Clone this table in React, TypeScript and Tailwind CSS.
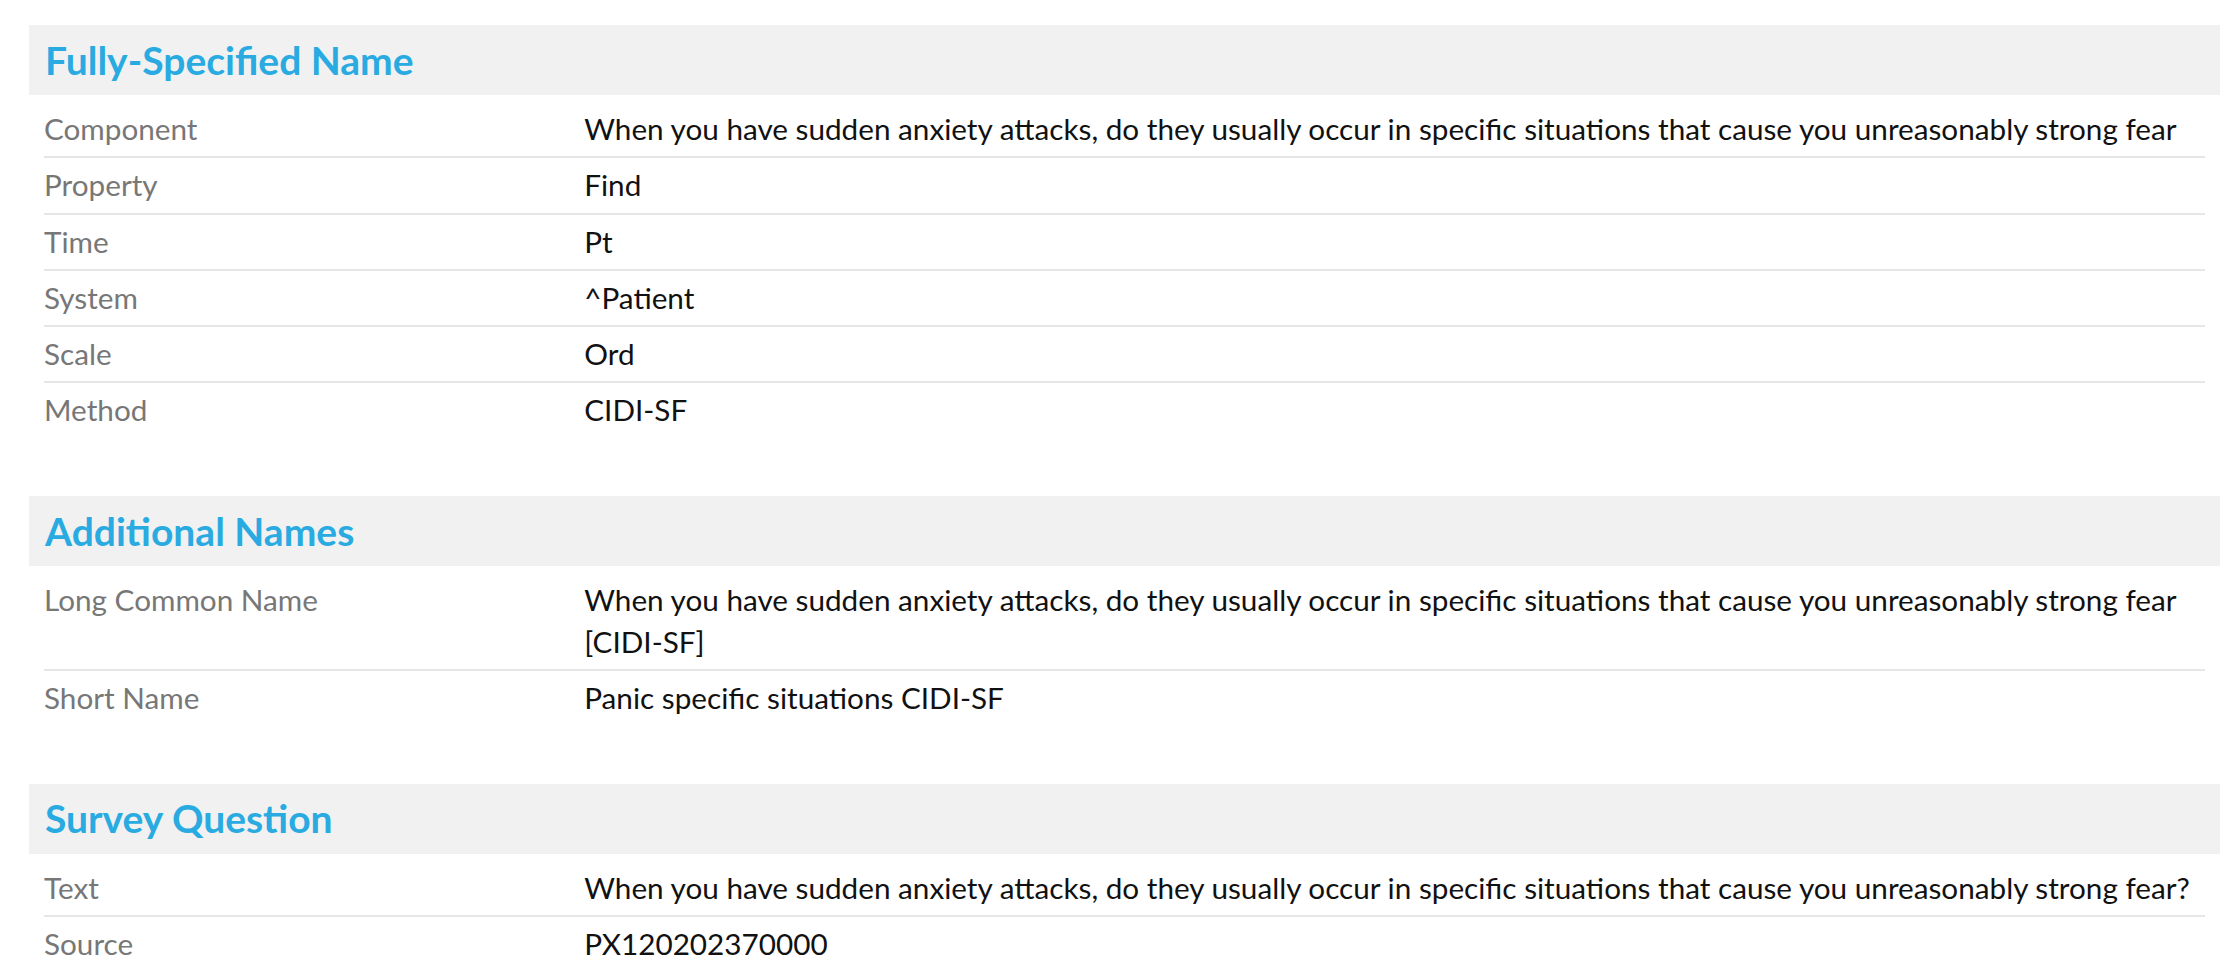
import React from 'react';

type Row = { label: string; value: string };
type Section = { title: string; rows: Row[] };

const FEAR = 'When you have sudden anxiety attacks, do they usually occur in specific situations that cause you unreasonably strong fear';

const sections: Section[] = [
  {
    title: 'Fully-Specified Name',
    rows: [
      { label: 'Component', value: FEAR },
      { label: 'Property', value: 'Find' },
      { label: 'Time', value: 'Pt' },
      { label: 'System', value: '^Patient' },
      { label: 'Scale', value: 'Ord' },
      { label: 'Method', value: 'CIDI-SF' },
    ],
  },
  {
    title: 'Additional Names',
    rows: [
      { label: 'Long Common Name', value: `${FEAR} [CIDI-SF]` },
      { label: 'Short Name', value: 'Panic specific situations CIDI-SF' },
    ],
  },
  {
    title: 'Survey Question',
    rows: [
      { label: 'Text', value: `${FEAR}?` },
      { label: 'Source', value: 'PX120202370000' },
    ],
  },
];

const DetailSection: React.FC<{ section: Section }> = ({ section }) => (
  <section className="mb-[56px]">
    <h2 className="flex h-[70px] items-center bg-[#f1f1f1] px-4 text-[39px] font-bold text-[#29abe2]">
      {section.title}
    </h2>
    <div className="mx-[15px] mt-[7px]">
      {section.rows.map((row, i) => (
        <div
          key={row.label}
          className={`grid grid-cols-[25%_75%] border-b-2 py-[6px] text-[29.7px] leading-[42.3px] ${
            i === section.rows.length - 1 ? 'border-transparent' : 'border-[#e6e6e6]'
          }`}
        >
          <div className="text-[#777777]">{row.label}</div>
          <div className="text-[#111111]">{row.value}</div>
        </div>
      ))}
    </div>
  </section>
);

export default function App() {
  return (
    <div className="min-h-screen bg-white font-['Lato',sans-serif]">
      <div className="ml-[29px] mr-[10px] pt-[25px]">
        {sections.map(s => (
          <DetailSection key={s.title} section={s} />
        ))}
      </div>
    </div>
  );
}
